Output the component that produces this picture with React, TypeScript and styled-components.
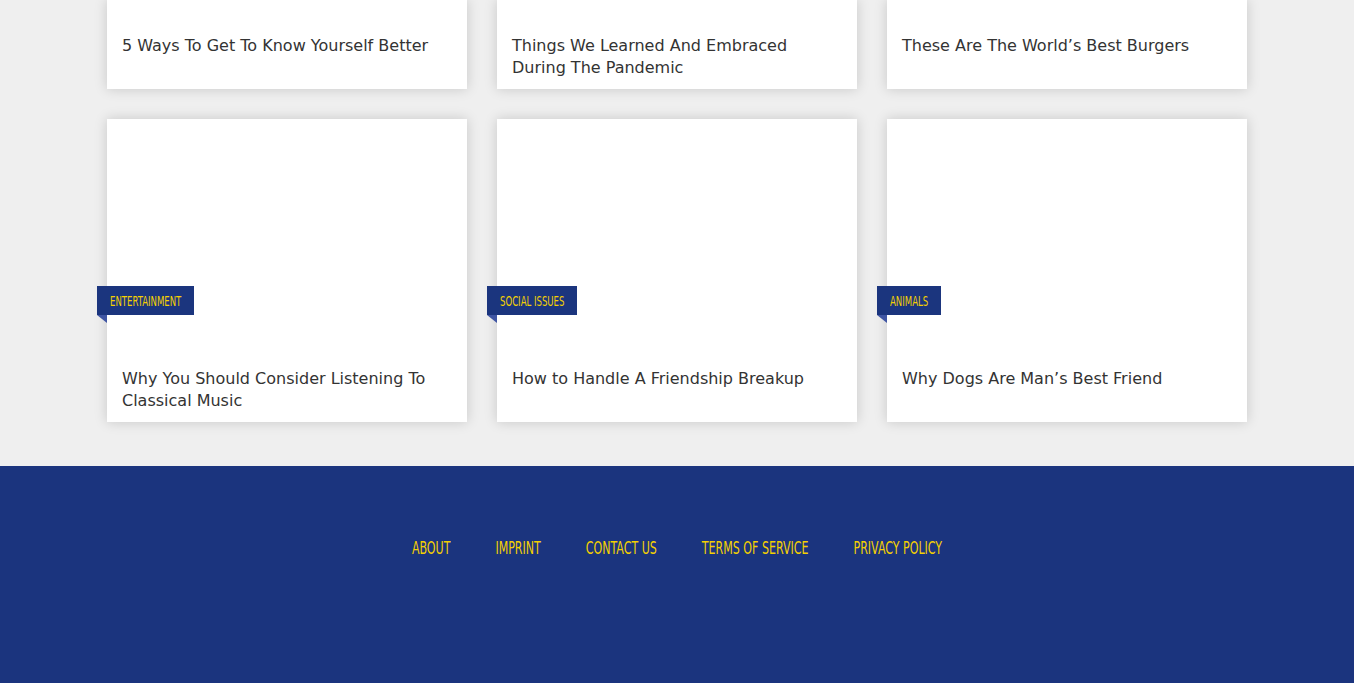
import React from "react";
import styled, { createGlobalStyle } from "styled-components";

const Global = createGlobalStyle`
  html, body { margin: 0; padding: 0; background: #ffffff; }
  body { font-family: "DejaVu Sans", sans-serif; }
  #root { width: 1354px; overflow: hidden; }
`;

const Page = styled.div`
  background: #efefef;
  display: flex;
  flex-direction: column;
`;

const Main = styled.main`
  width: 1140px;
  margin: 0 auto;
  padding-bottom: 44px;
  display: flex;
  flex-direction: column;
  gap: 30px;
`;

const Row = styled.div`
  display: grid;
  grid-template-columns: repeat(3, 360px);
  gap: 30px;
`;

const Card = styled.article`
  background: #ffffff;
  box-shadow: 0 0 12px rgba(0, 0, 0, 0.17);
  display: flex;
  flex-direction: column;
`;

const ImageArea = styled.div<{ $h: number }>`
  position: relative;
  height: ${(p) => p.$h}px;
  background: #ffffff;
`;

const Category = styled.span`
  position: absolute;
  left: -10px;
  bottom: 40px;
  height: 29px;
  padding: 0 13px;
  display: flex;
  align-items: center;
  background: #1b357e;
  color: #f5d100;
  font-family: "DejaVu Sans Condensed", "DejaVu Sans", sans-serif;
  font-size: 9.5px;
  text-transform: uppercase;
  &::after {
    content: "";
    position: absolute;
    left: 0;
    top: 29px;
    border-top: 8px solid #3f55a3;
    border-left: 10px solid transparent;
  }
`;

const CategoryText = styled.span`
  display: inline-block;
  transform: scaleY(1.45);
`;

const Title = styled.h2`
  margin: 0;
  padding: 13px 15px 10px;
  font-family: "DejaVu Sans", sans-serif;
  font-weight: normal;
  font-size: 16px;
  line-height: 22px;
  color: #333333;
`;

const Footer = styled.footer`
  background: #1b347e;
  min-height: 240px;
  padding-top: 71px;
  box-sizing: border-box;
`;

const FooterNav = styled.nav`
  display: flex;
  justify-content: center;
  gap: 45px;
`;

const FooterLink = styled.a`
  display: inline-block;
  color: #f5d100;
  text-decoration: none;
  font-family: "DejaVu Sans Condensed", "DejaVu Sans", sans-serif;
  font-size: 12.3px;
  line-height: 22px;
  text-transform: uppercase;
  transform: scaleY(1.42);
`;

type Post = { title: string; category?: string };

const topRow: Post[] = [
  { title: "5 Ways To Get To Know Yourself Better" },
  { title: "Things We Learned And Embraced During The Pandemic" },
  { title: "These Are The World’s Best Burgers" },
];

const secondRow: Post[] = [
  { title: "Why You Should Consider Listening To Classical Music", category: "Entertainment" },
  { title: "How to Handle A Friendship Breakup", category: "Social Issues" },
  { title: "Why Dogs Are Man’s Best Friend", category: "Animals" },
];

const links = ["About", "Imprint", "Contact Us", "Terms of Service", "Privacy Policy"];

function PostCard({ post, imageHeight }: { post: Post; imageHeight: number }) {
  return (
    <Card>
      <ImageArea $h={imageHeight}>
        {post.category && (
          <Category>
            <CategoryText>{post.category}</CategoryText>
          </Category>
        )}
      </ImageArea>
      <Title>{post.title}</Title>
    </Card>
  );
}

export default function App() {
  return (
    <>
      <Global />
      <Page>
        <Main>
          <Row>
            {topRow.map((p) => (
              <PostCard key={p.title} post={p} imageHeight={22} />
            ))}
          </Row>
          <Row>
            {secondRow.map((p) => (
              <PostCard key={p.title} post={p} imageHeight={236} />
            ))}
          </Row>
        </Main>
        <Footer>
          <FooterNav>
            {links.map((l) => (
              <FooterLink key={l} href="#">
                {l}
              </FooterLink>
            ))}
          </FooterNav>
        </Footer>
      </Page>
    </>
  );
}
